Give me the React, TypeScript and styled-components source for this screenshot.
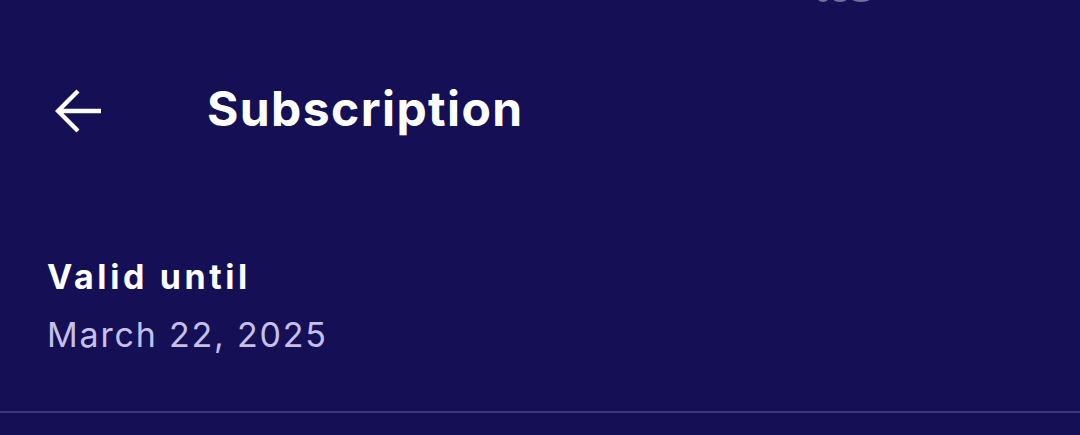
import styled, { createGlobalStyle } from "styled-components";

const Global = createGlobalStyle`
  html, body {
    margin: 0;
    padding: 0;
    background: #150f55;
  }
  body {
    font-family: "Inter", "Liberation Sans", sans-serif;
    -webkit-font-smoothing: antialiased;
  }
`;

function BackArrow() {
  return (
    <svg width="48" height="46" viewBox="0 0 48 46" fill="none">
      <path
        d="M46 23H4M23 3L3 23l20 20"
        stroke="#ffffff"
        strokeWidth="4.4"
        strokeLinecap="butt"
        strokeLinejoin="miter"
      />
    </svg>
  );
}

function App() {
  return (
    <>
      <Global />
      <Screen>
        <StatusStrip>
          <StatusDot w={10} />
          <StatusDot w={14} />
          <StatusDot w={18} />
        </StatusStrip>
        <Header>
          <BackButton aria-label="Back">
            <BackArrow />
          </BackButton>
          <Title>Subscription</Title>
        </Header>
        <InfoBlock>
          <Label>Valid until</Label>
          <Value>March 22, 2025</Value>
        </InfoBlock>
        <Divider />
      </Screen>
    </>
  );
}

const Screen = styled.div`
  width: 1080px;
  height: 435px;
  background: #150f55;
  overflow: hidden;
  display: flex;
  flex-direction: column;
`;

const StatusStrip = styled.div`
  height: 3px;
  display: flex;
  gap: 5px;
  padding-left: 818px;
  overflow: hidden;
`;

const StatusDot = styled.span<{ w: number }>`
  width: ${({ w }) => w}px;
  height: 6px;
  margin-top: -4px;
  border-radius: 50%;
  background: rgba(255, 255, 255, 0.4);
`;

const Header = styled.div`
  height: 215px;
  display: flex;
  align-items: center;
  padding-left: 55px;
`;

const BackButton = styled.div`
  width: 48px;
  height: 46px;
  display: flex;
  margin-right: 104px;
`;

const Title = styled.h1`
  margin: 0 0 4px;
  color: #ffffff;
  font-size: 48px;
  font-weight: 700;
  letter-spacing: 1.4px;
  line-height: 56px;
`;

const InfoBlock = styled.div`
  display: flex;
  flex-direction: column;
  gap: 18px;
  padding: 39px 0 0 47px;
`;

const Label = styled.div`
  color: #ffffff;
  font-size: 34px;
  font-weight: 700;
  letter-spacing: 3.6px;
  line-height: 40px;
`;

const Value = styled.div`
  color: #c4c0e8;
  font-size: 34px;
  font-weight: 400;
  letter-spacing: 1.8px;
  line-height: 40px;
`;

const Divider = styled.div`
  margin-top: 56px;
  height: 2px;
  background: #3c3681;
`;

export default App;
